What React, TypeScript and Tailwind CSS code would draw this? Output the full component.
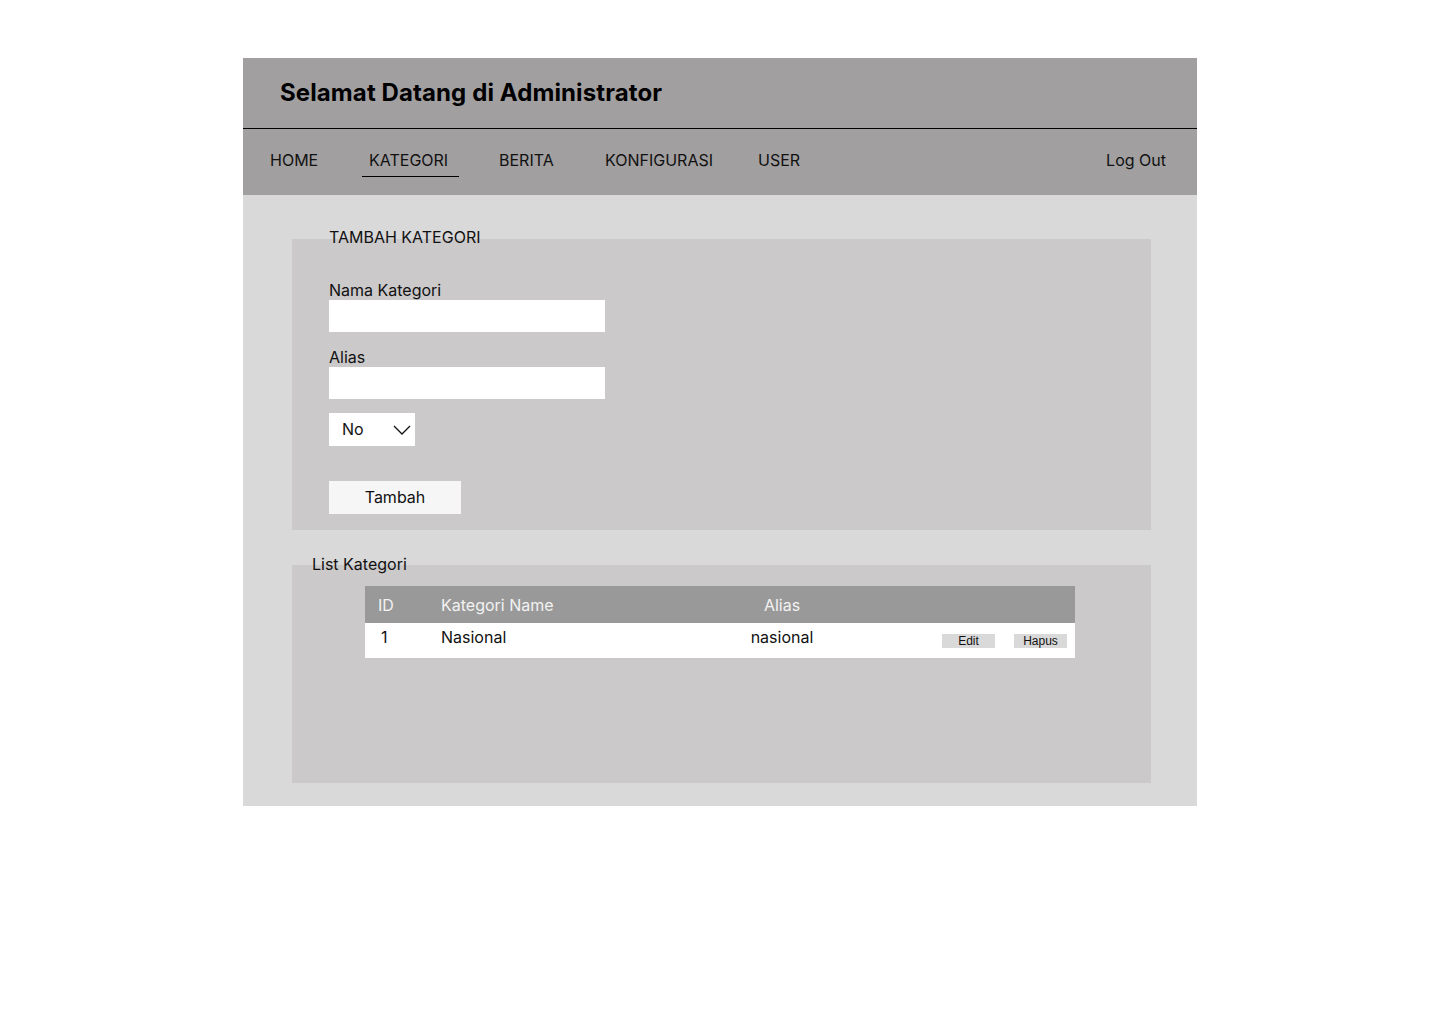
import React from "react";

export default function App() {
  return (
    <div className="min-h-[1024px] w-[1440px] bg-white pt-[58px] pl-[243px]" style={{ fontFamily: "Inter, 'Noto Sans', sans-serif" }}>
      <div className="w-[954px]">
        {/* Header */}
        <div className="h-[71px] bg-[#a19fa0] border-b border-black flex items-center pl-[37px]">
          <h1 className="text-[24px] leading-[30px] font-bold text-black tracking-[0.1px]">Selamat Datang di Administrator</h1>
        </div>
        {/* Nav */}
        <div className="h-[66px] bg-[#a19fa0] flex items-start pt-[19px] pl-[27px] pr-[31px] text-[16px] leading-[24px] text-[#111]">
          <div className="w-[99px]">HOME</div>
          <div className="w-[130px]">
            <span className="inline-block w-[97px] -ml-[7px] pl-[7px] pb-[4px] border-b border-black">KATEGORI</span>
          </div>
          <div className="w-[106px]">BERITA</div>
          <div className="w-[153px]">KONFIGURASI</div>
          <div>USER</div>
          <div className="ml-auto">Log Out</div>
        </div>
        {/* Content */}
        <div className="bg-[#d9d9d9] pt-[44px] pb-[23px] pl-[49px] pr-[46px]">
          {/* Tambah Kategori panel */}
          <div className="flow-root bg-[#cbc9ca] pl-[37px] pb-[16px]">
            <div className="-mt-[14px] text-[16px] leading-[24px] text-[#111]">TAMBAH KATEGORI</div>
            <div className="mt-[31px] text-[16px] leading-[20px] text-[#111]">Nama Kategori</div>
            <div className="w-[276px] h-[32px] bg-white"></div>
            <div className="mt-[15px] text-[16px] leading-[20px] text-[#111]">Alias</div>
            <div className="w-[276px] h-[32px] bg-white"></div>
            <div className="mt-[14px] w-[86px] h-[33px] bg-white flex items-center pl-[13px] pr-[4px] text-[16px] leading-[20px] text-[#111]">
              <span className="-mt-[1px]">No</span>
              <svg className="ml-auto" width="18" height="10" viewBox="0 0 18 10" fill="none">
                <polyline points="1,1 9,9 17,1" stroke="#111" strokeWidth="1.3" />
              </svg>
            </div>
            <div className="mt-[35px] w-[132px] h-[33px] bg-[#f6f6f6] flex items-center justify-center text-[16px] leading-[20px] text-[#111]">
              <span className="-mt-[1px]">Tambah</span>
            </div>
          </div>
          {/* List Kategori panel */}
          <div className="flow-root mt-[35px] bg-[#cbc9ca] h-[218px]">
            <div className="-mt-[13px] pl-[20px] text-[16px] leading-[24px] text-[#111]">List Kategori</div>
            <div className="mt-[10px] ml-[73px] w-[710px]">
              <div className="h-[37px] bg-[#999999] flex items-center text-[16px] leading-[20px] text-[#f2f2f2]">
                <div className="w-[76px] pl-[13px]">ID</div>
                <div className="w-[300px]">Kategori Name</div>
                <div className="w-[82px] text-center">Alias</div>
              </div>
              <div className="h-[35px] bg-white flex items-center text-[16px] leading-[20px] text-[#111]">
                <div className="w-[76px] pl-[16px] -mt-[7px]">1</div>
                <div className="w-[300px] -mt-[7px]">Nasional</div>
                <div className="w-[82px] text-center -mt-[7px]">nasional</div>
                <div className="ml-[119px] w-[53px] h-[14px] bg-[#d9d9d9] text-[12px] leading-[14px] text-center mt-[1px] font-['Liberation_Sans',Arial,sans-serif]">Edit</div>
                <div className="ml-[19px] w-[53px] h-[14px] bg-[#d9d9d9] text-[12px] leading-[14px] text-center mt-[1px] font-['Liberation_Sans',Arial,sans-serif]">Hapus</div>
              </div>
            </div>
          </div>
        </div>
      </div>
    </div>
  );
}
